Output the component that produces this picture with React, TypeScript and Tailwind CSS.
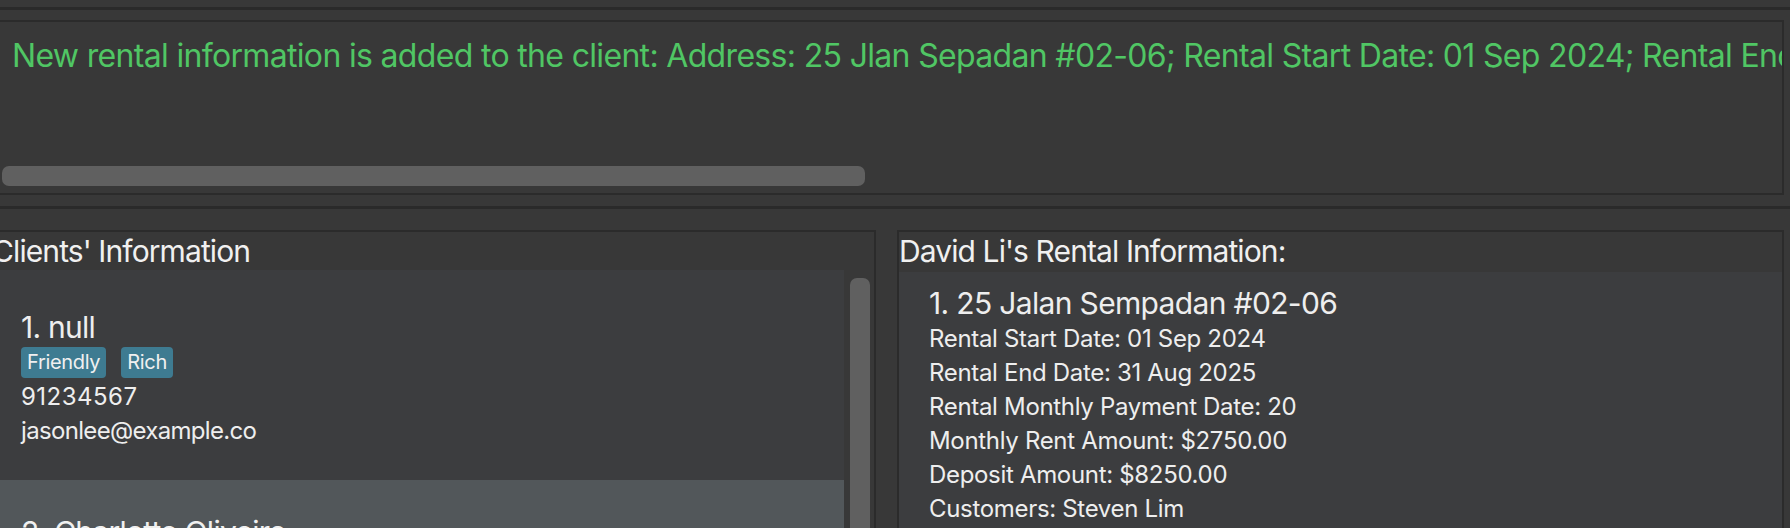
import React from "react";

const message =
  "New rental information is added to the client: Address: 25 Jlan Sepadan #02-06; Rental Start Date: 01 Sep 2024; Rental End Date: 31 Aug 2025; Rental Monthly Payment Date: 20; Monthly Rent Amount: $2750.00; Deposit Amount: $8250.00; Customers: Steven Lim";

const rental = [
  "Rental Start Date: 01 Sep 2024",
  "Rental End Date: 31 Aug 2025",
  "Rental Monthly Payment Date: 20",
  "Monthly Rent Amount: $2750.00",
  "Deposit Amount: $8250.00",
  "Customers: Steven Lim",
];

const Tag = ({ label }: { label: string }) => (
  <span className="h-[31px] px-[6px] rounded-[4px] bg-[#3e7b91] text-[20px] leading-[31px] text-[#f0f0f0]">
    {label}
  </span>
);

const ClientCard = () => (
  <div className="h-[210px] pl-[29px] pt-[39px] bg-[#3c3d3f] text-[#eeeeee]">
    <div className="text-[30px] leading-[36px] tracking-[-0.025em]">1. null</div>
    <div className="flex gap-[15px] mt-[2px]">
      <Tag label="Friendly" />
      <Tag label="Rich" />
    </div>
    <div className="mt-[2px] text-[24px] leading-[33px] tracking-[0.02em]">91234567</div>
    <div className="mt-[1px] text-[24px] leading-[33px] tracking-[-0.028em]">jasonlee@example.co</div>
  </div>
);

export default function App() {
  return (
    <div
      className="w-[1790px] h-[528px] overflow-hidden bg-[#383838] tracking-[-0.02em]"
      style={{ fontFamily: "Inter, 'Noto Sans', sans-serif" }}
    >
      <div className="h-[7px]" />
      <div className="h-[3px] bg-[#2a2a2a]" />

      {/* result display */}
      <div className="pt-[10px] pb-[11px] pr-[6px]">
        <div className="h-[175px] flex flex-col border-2 border-l-0 border-[#2b2b2b] overflow-hidden">
          <p className="pl-[12px] pt-[14px] text-[32px] leading-[40px] tracking-[-0.021em] text-[#50c664] whitespace-nowrap">
            {message}
          </p>
          <div className="mt-auto mb-[7px] ml-[2px] w-[863px] h-[20px] rounded-[7px] bg-[#606060]" />
        </div>
      </div>

      <div className="h-[3px] bg-[#2a2a2a]" />

      {/* panels */}
      <div className="flex gap-[21px] pt-[21px] pr-[6px]">
        <div className="-ml-[10px] w-[886px] shrink-0 h-[320px] border-2 border-b-0 border-[#2b2b2b] flex flex-col">
          <div className="h-[40px] pt-[1px] text-[30px] leading-[36px] tracking-[-0.03em] text-[#f0f0f0] whitespace-nowrap">
            Clients' Information
          </div>
          <div className="flex flex-1">
            <div className="flex-1 flex flex-col">
              <ClientCard />
              <div className="flex-1 pl-[29px] pt-[34px] bg-[#52575a] text-[30px] leading-[36px] tracking-[-0.025em] text-[#f0f0f0]">
                2. Charlotte Oliveiro
              </div>
            </div>
            <div className="w-[30px] pl-[6px] pt-[8px]">
              <div className="w-[20px] h-full rounded-[7px] bg-[#606060]" />
            </div>
          </div>
        </div>

        <div className="flex-1 h-[320px] border-2 border-b-0 border-[#2b2b2b] flex flex-col">
          <div className="h-[40px] pt-[1px] text-[30px] leading-[36px] tracking-[-0.03em] text-[#f0f0f0] whitespace-nowrap">
            David Li's Rental Information:
          </div>
          <div className="flex-1 bg-[#3c3d3f] pl-[30px] pt-[13px] text-[#eeeeee]">
            <div className="text-[30px] leading-[36px] tracking-[-0.022em]">1. 25 Jalan Sempadan #02-06</div>
            <div className="mt-[1px]">
              {rental.map((line) => (
                <div key={line} className="text-[24px] leading-[34px]">
                  {line}
                </div>
              ))}
            </div>
          </div>
        </div>
      </div>
    </div>
  );
}
